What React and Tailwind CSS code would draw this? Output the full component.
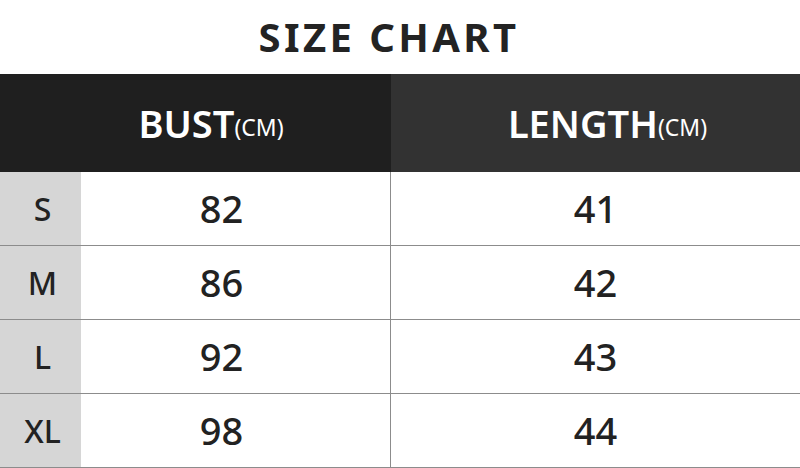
const rows = [
  { size: 'S', bust: 82, length: 41 },
  { size: 'M', bust: 86, length: 42 },
  { size: 'L', bust: 92, length: 43 },
  { size: 'XL', bust: 98, length: 44 },
];

const App = () => {
  return (
    <div className="h-[468px] w-[800px] overflow-hidden bg-white font-['Noto_Sans','Open_Sans',sans-serif] text-[#222]">
      <h1 className="flex h-[74px] items-center justify-center pb-[1px] pr-[22px] text-[40px] font-bold tracking-[0.085em] text-[#232323]">
        SIZE CHART
      </h1>

      <div className="grid h-[98px] grid-cols-[391px_1fr] text-white">
        <div className="flex items-center justify-center bg-[#1f1f1f] pl-[31px]">
          <span className="text-[38px] font-semibold">BUST</span>
          <span className="mt-[8px] text-[23px]">(CM)</span>
        </div>
        <div className="flex items-center justify-center bg-[#323232] pl-[24px]">
          <span className="text-[38px] font-semibold">LENGTH</span>
          <span className="mt-[8px] text-[23px]">(CM)</span>
        </div>
      </div>

      {rows.map((row) => (
        <div
          key={row.size}
          className="grid h-[74px] grid-cols-[81px_310px_1fr] border-b border-[#8c8c8c]"
        >
          <div className="flex items-center justify-center bg-[#d6d6d6] pl-[4px] text-[32px] font-medium">
            {row.size}
          </div>
          <div className="flex items-center justify-center border-r border-[#8c8c8c] pr-[28px] text-[38px] font-medium">
            {row.bust}
          </div>
          <div className="flex items-center justify-center text-[38px] font-medium">
            {row.length}
          </div>
        </div>
      ))}
    </div>
  );
};

export default App;
